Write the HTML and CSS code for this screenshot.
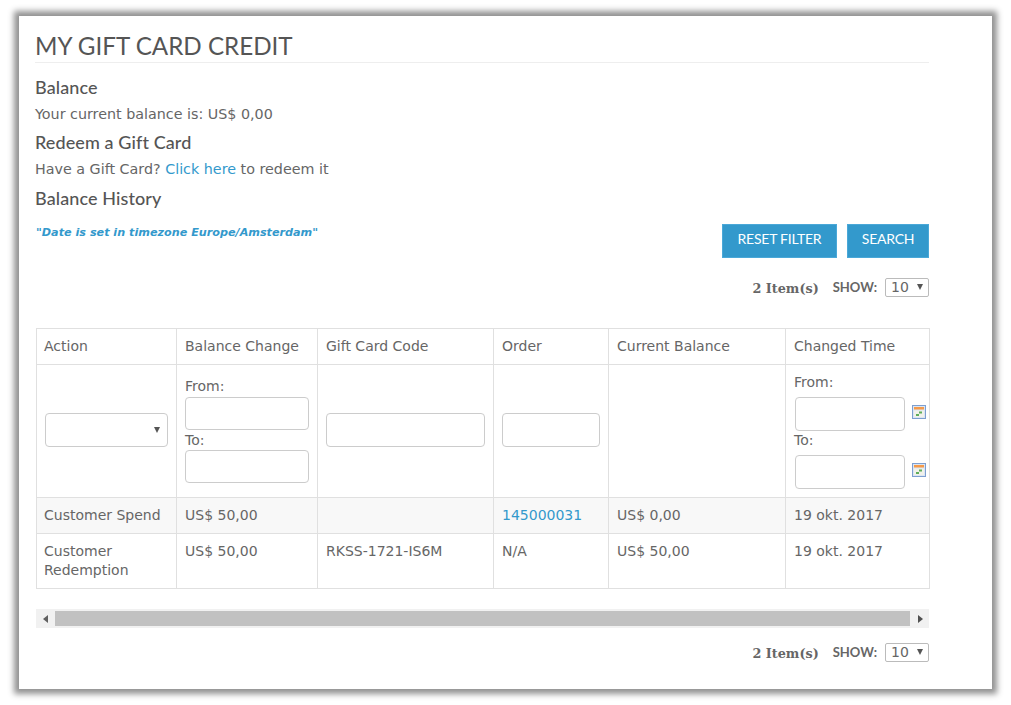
FILE: index.html
```html
<!DOCTYPE html>
<html lang="en">
<head>
    <meta charset="UTF-8">
    <title>My Gift Card Credit</title>
    <link rel="stylesheet" href="styles.css">
</head>
<body>
    <div class="card">
        <h1 class="title">MY GIFT CARD CREDIT</h1>

        <h2 class="sub first">Balance</h2>
        <p class="line">Your current balance is: US$ 0,00</p>
        <h2 class="sub">Redeem a Gift Card</h2>
        <p class="line">Have a Gift Card? <a href="#">Click here</a> to redeem it</p>
        <h2 class="sub last">Balance History</h2>

        <div class="filterbar">
            <em class="note">"Date is set in timezone Europe/Amsterdam"</em>
            <div class="buttons">
                <button class="btn reset" type="button">RESET FILTER</button>
                <button class="btn search" type="button">SEARCH</button>
            </div>
        </div>

        <div class="pager">
            <b class="count">2 Item(s)</b>
            <span class="show">SHOW:</span>
            <span class="pick">10<i class="arrow"></i></span>
        </div>

        <table class="grid">
            <colgroup>
                <col class="c1"><col class="c2"><col class="c3"><col class="c4"><col class="c5"><col class="c6">
            </colgroup>
            <tr class="head">
                <th>Action</th>
                <th>Balance Change</th>
                <th>Gift Card Code</th>
                <th>Order</th>
                <th>Current Balance</th>
                <th>Changed Time</th>
            </tr>
            <tr class="filters">
                <td><span class="field dropdown"><i class="arrow"></i></span></td>
                <td class="range">
                    <label class="lbl from">From:</label>
                    <span class="field"></span>
                    <label class="lbl">To:</label>
                    <span class="field"></span>
                </td>
                <td><span class="field"></span></td>
                <td><span class="field"></span></td>
                <td></td>
                <td class="dates">
                    <label class="lbl">From:</label>
                    <div class="date-row">
                        <span class="field"></span>
                        <svg class="cal" viewBox="0 0 14 14" width="14" height="14">
                            <rect x="0.5" y="0.5" width="13" height="13" fill="#dbe6f4" stroke="#7d9fd0"/>
                            <rect x="2" y="2" width="10" height="2.5" fill="#f59a4a"/>
                            <rect x="2" y="5.5" width="10" height="6.5" fill="#f1f1ea"/>
                            <rect x="7" y="6.5" width="3" height="2" fill="#5fae5a"/>
                            <rect x="4" y="9" width="3" height="2" fill="#5fae5a"/>
                        </svg>
                    </div>
                    <label class="lbl">To:</label>
                    <div class="date-row">
                        <span class="field"></span>
                        <svg class="cal" viewBox="0 0 14 14" width="14" height="14">
                            <rect x="0.5" y="0.5" width="13" height="13" fill="#dbe6f4" stroke="#7d9fd0"/>
                            <rect x="2" y="2" width="10" height="2.5" fill="#f59a4a"/>
                            <rect x="2" y="5.5" width="10" height="6.5" fill="#f1f1ea"/>
                            <rect x="7" y="6.5" width="3" height="2" fill="#5fae5a"/>
                            <rect x="4" y="9" width="3" height="2" fill="#5fae5a"/>
                        </svg>
                    </div>
                </td>
            </tr>
            <tr class="row odd">
                <td>Customer Spend</td>
                <td>US$ 50,00</td>
                <td></td>
                <td><a href="#">145000031</a></td>
                <td>US$ 0,00</td>
                <td>19 okt. 2017</td>
            </tr>
            <tr class="row tall">
                <td>Customer Redemption</td>
                <td>US$ 50,00</td>
                <td>RKSS-1721-IS6M</td>
                <td>N/A</td>
                <td>US$ 50,00</td>
                <td>19 okt. 2017</td>
            </tr>
        </table>

        <div class="scrollbar">
            <span class="sb-btn"><i class="tri left"></i></span>
            <span class="sb-thumb"></span>
            <span class="sb-btn"><i class="tri right"></i></span>
        </div>

        <div class="pager bottom">
            <b class="count">2 Item(s)</b>
            <span class="show">SHOW:</span>
            <span class="pick">10<i class="arrow"></i></span>
        </div>
    </div>
</body>
</html>
```

FILE: styles.css
```css
* {
    box-sizing: border-box;
    margin: 0;
    padding: 0;
}

body {
    background-color: #ffffff;
    font-family: "DejaVu Sans", Verdana, sans-serif;
    font-size: 14px;
    color: #666666;
    padding: 16px 19px;
}

a {
    color: #3399cc;
    text-decoration: none;
}

.card {
    height: 673px;
    background-color: #ffffff;
    padding: 13px 63px 0 16px;
    box-shadow: 0 0 6px 5px #929292;
}

.title {
    font-family: Lato, sans-serif;
    font-size: 24.2px;
    font-weight: 400;
    line-height: 33px;
    color: #555555;
    border-bottom: 1px solid #eeeeee;
}

.sub {
    font-family: Lato, sans-serif;
    font-size: 18px;
    font-weight: 500;
    line-height: 24px;
    letter-spacing: 0.1px;
    color: #555555;
    margin-top: 6px;
}

.sub.first {
    margin-top: 12px;
}

.sub.last {
    margin-top: 7px;
}

.line {
    font-size: 14.3px;
    line-height: 20px;
    margin-top: 5px;
}

.filterbar {
    display: flex;
    justify-content: space-between;
    margin-top: 14px;
}

.note {
    font-size: 11.2px;
    font-weight: 700;
    font-style: italic;
    color: #3399cc;
    line-height: 16px;
    margin-top: 1px;
    margin-left: 1px;
}

.buttons {
    display: flex;
    gap: 10px;
}

.btn {
    height: 34px;
    padding: 0 0 5px;
    border: 1px solid #4aa8d8;
    background-color: #3399cc;
    color: #ffffff;
    font-family: Lato, sans-serif;
    font-size: 14px;
    letter-spacing: -0.25px;
}

.reset {
    width: 115px;
}

.search {
    width: 82px;
}

.pager {
    display: flex;
    justify-content: flex-end;
    align-items: center;
    height: 20px;
    margin-top: 19px;
    font-size: 12px;
}

.count {
    font-family: "DejaVu Serif", serif;
    font-size: 12.8px;
    color: #666666;
    margin-top: 2px;
}

.show {
    font-family: Lato, sans-serif;
    font-weight: 700;
    font-size: 13px;
    margin-left: 14px;
    margin-right: 8px;
}

.pick {
    display: flex;
    align-items: center;
    justify-content: space-between;
    width: 44px;
    height: 19px;
    padding: 0 5px;
    border: 1px solid #bbbbbb;
    border-radius: 2px;
    font-size: 14px;
}

.arrow {
    width: 0;
    height: 0;
    border-left: 3.5px solid transparent;
    border-right: 3.5px solid transparent;
    border-top: 6px solid #555555;
}

.grid {
    width: 893px;
    table-layout: fixed;
    border-collapse: collapse;
    margin-top: 31px;
    margin-left: 1px;
}

.c1 { width: 140px; }
.c2 { width: 141px; }
.c3 { width: 176px; }
.c4 { width: 115px; }
.c5 { width: 177px; }
.c6 { width: 144px; }

.grid th,
.grid td {
    border: 1px solid #e0e0e0;
    padding: 0 8px;
    font-weight: 400;
    text-align: left;
    line-height: 19px;
}

.grid th:first-child,
.grid .row td:first-child {
    padding-left: 7px;
}

.head th {
    height: 36px;
}

.grid .filters td {
    height: 133px;
    padding-bottom: 2px;
}

.grid .filters td.range {
    padding-bottom: 4px;
}

.grid .filters td.dates {
    padding-bottom: 0;
}

.row.odd td {
    height: 36px;
    background-color: #f8f8f8;
}

.grid .row.tall td {
    height: 55px;
    padding-top: 8px;
    padding-bottom: 8px;
    vertical-align: top;
}

.grid .lbl {
    display: block;
    line-height: 20px;
}

.grid .lbl.from {
    line-height: 22px;
}

.grid .dates .lbl {
    line-height: 19px;
}

.field {
    display: block;
    height: 34px;
    border: 1px solid #cccccc;
    border-radius: 4px;
    background-color: #ffffff;
}

.range .field {
    height: 33px;
}

.dropdown {
    display: flex;
    align-items: center;
    justify-content: flex-end;
    padding-right: 7px;
}

.date-row {
    display: flex;
    align-items: center;
    gap: 7px;
    margin-left: 1px;
    margin-right: -5px;
    margin-top: 5px;
}

.date-row .field {
    width: 110px;
}

.cal {
    flex: none;
    margin-top: -4px;
}

.scrollbar {
    display: flex;
    align-items: stretch;
    height: 19px;
    margin-top: 20px;
    margin-left: 1px;
    background-color: #f1f1f1;
}

.sb-btn {
    display: flex;
    align-items: center;
    justify-content: center;
    width: 18px;
}

.sb-thumb {
    flex: 1;
    margin: 2px 1px;
    background-color: #c1c1c1;
}

.tri {
    width: 0;
    height: 0;
    border-top: 4.5px solid transparent;
    border-bottom: 4.5px solid transparent;
}

.tri.left {
    border-right: 5px solid #606060;
}

.tri.right {
    border-left: 5px solid #505050;
}

.pager.bottom {
    margin-top: 14px;
}
```
